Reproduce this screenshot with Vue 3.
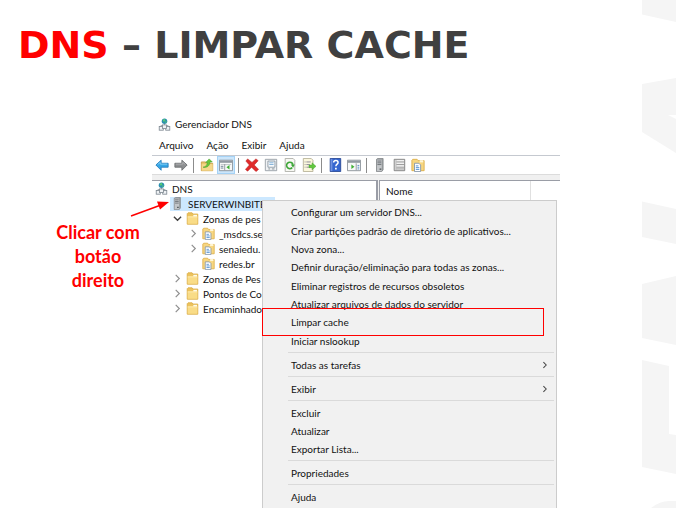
<script setup>
const menuBar = ['Arquivo', 'Ação', 'Exibir', 'Ajuda']

const toolGroups = [
  [{ id: 'back', label: 'Voltar' }, { id: 'forward', label: 'Avançar' }],
  [{ id: 'up', label: 'Subir um nível' }, { id: 'tree', label: 'Mostrar árvore', active: true }],
  [
    { id: 'delete', label: 'Excluir' },
    { id: 'props', label: 'Propriedades' },
    { id: 'refresh', label: 'Atualizar' },
    { id: 'export', label: 'Exportar lista' },
  ],
  [{ id: 'help', label: 'Ajuda' }, { id: 'pane', label: 'Painel de ações' }],
  [
    { id: 'server', label: 'Servidor' },
    { id: 'list', label: 'Lista' },
    { id: 'zone', label: 'Nova zona' },
  ],
]

const nodes = [
  { text: 'DNS', icon: 'dns', level: 0 },
  { text: 'SERVERWINBITBR', icon: 'server', level: 1, selected: true },
  { text: 'Zonas de pes', icon: 'folder', level: 2, chevron: 'open' },
  { text: '_msdcs.se', icon: 'zone', level: 3, chevron: 'closed' },
  { text: 'senaiedu.', icon: 'zone', level: 3, chevron: 'closed' },
  { text: 'redes.br', icon: 'zone', level: 3 },
  { text: 'Zonas de Pes', icon: 'folder', level: 2, chevron: 'closed' },
  { text: 'Pontos de Co', icon: 'folder', level: 2, chevron: 'closed' },
  { text: 'Encaminhado', icon: 'folder', level: 2, chevron: 'closed' },
]

const contextGroups = [
  [
    { text: 'Configurar um servidor DNS...' },
    { text: 'Criar partições padrão de diretório de aplicativos...' },
    { text: 'Nova zona...' },
    { text: 'Definir duração/eliminação para todas as zonas...' },
    { text: 'Eliminar registros de recursos obsoletos' },
    { text: 'Atualizar arquivos de dados do servidor' },
    { text: 'Limpar cache', marked: true },
    { text: 'Iniciar nslookup' },
  ],
  [{ text: 'Todas as tarefas', submenu: true }],
  [{ text: 'Exibir', submenu: true }],
  [{ text: 'Excluir' }, { text: 'Atualizar' }, { text: 'Exportar Lista...' }],
  [{ text: 'Propriedades' }],
  [{ text: 'Ajuda' }],
]
</script>

<template>
  <div class="slide">
    <svg class="sprite" aria-hidden="true">
      <symbol id="i-dns" viewBox="0 0 16 16">
        <circle cx="8" cy="4" r="3.4" fill="#2b8fb0" />
        <path d="M6 2.500 8 1l1 2-2 2zM9 4l2 .5L9.500 6.500z" fill="#5bd06a" />
        <path d="M8 7v3M3.500 11V9.500h9V11" fill="none" stroke="#7d8790" />
        <rect x="1.500" y="10.500" width="5" height="4.500" fill="#eef1f4" stroke="#7d8790" />
        <rect x="9.500" y="10.500" width="5" height="4.500" fill="#eef1f4" stroke="#7d8790" />
        <rect x="5.500" y="8.500" width="5" height="4.500" fill="#eef1f4" stroke="#7d8790" />
      </symbol>
      <symbol id="i-server" viewBox="0 0 16 16">
        <path d="M4 1.500 5.500.5h6v13l-1.500 2H4z" fill="#9a9ea1" stroke="#85898c" />
        <path d="M4.500 2h5.500v13H4.500z" fill="#c3c6c9" />
        <path d="M5 3.500h4.500M5 5.500h4.500M5 7.500h4.500" stroke="#686d71" />
        <path d="M7.500 12h2v1.500h-2z" fill="#4f5559" />
      </symbol>
      <symbol id="i-folder" viewBox="0 0 16 16">
        <path d="M1.500 15v-13l1-1h5l1 1.500h6V15z" fill="#edc35c" stroke="#d9ab45" />
        <path d="M9 3.500h4.500V6H9z" fill="#fffbe9" />
        <path d="M2 5.500h12v9H2z" fill="#f9dc87" />
        <path d="M2 6h12" stroke="#fff0bd" />
      </symbol>
      <symbol id="i-zone" viewBox="0 0 16 16">
        <path d="M1 14.500v-12l1-1h5l1 1.500h7v11.500z" fill="#f7d680" stroke="#dcae48" />
        <path d="M10 2.500h4V5h-4z" fill="#fff6d6" />
        <path d="M4 6h5l2 2v7.500H4z" fill="#fff" stroke="#8195aa" />
        <path d="M5.500 9h3M5.500 11h4M5.500 13h4" stroke="#4286ce" />
      </symbol>
      <symbol id="i-back" viewBox="0 0 16 16">
        <path d="M1 8l6-5.500V6h8v4.500H7V14z" fill="#35a6e6" stroke="#277dbb" stroke-linejoin="round" />
        <path d="M3 7.500 6 5v2h8" fill="none" stroke="#8ad4f7" />
      </symbol>
      <symbol id="i-forward" viewBox="0 0 16 16">
        <path d="M15 8 9 2.500V6H1v4.500h8V14z" fill="#8d8f91" stroke="#6c6e70" stroke-linejoin="round" />
        <path d="M2 7h8V5l3 2.500" fill="none" stroke="#b2b4b5" />
      </symbol>
      <symbol id="i-up" viewBox="0 0 16 16">
        <path d="M1.500 14.500V4.500h5L8 6h6.500v8.500z" fill="#e9c76d" stroke="#c99d43" />
        <path d="M2 14.500V7h12.500v7.500z" fill="#f5d88c" />
        <path d="M3.500 10.500C7 10 8 8 8.500 5H6.500L10.500 1 14 4.500h-2.500c-.5 4.500-3.500 7-8 6z" fill="#68c83a" stroke="#3e9b26" stroke-width=".6" />
      </symbol>
      <symbol id="i-tree" viewBox="0 0 16 16">
        <path d="M.5 2.500h15v12H.5z" fill="#f7f8f8" stroke="#858c93" />
        <path d="M1 3h14v2.500H1z" fill="#929aa2" />
        <path d="M2 7.500h12" stroke="#bcc1c5" />
        <path d="M6.500 7v7" stroke="#8b9298" />
        <path d="M2 9.500h3M2 11.500h3" stroke="#65798c" />
        <path d="M12 8v5L8.500 10.500z" fill="#3faf35" />
      </symbol>
      <symbol id="i-delete" viewBox="0 0 16 16">
        <path d="M3 1 8 5 12.500 1l2.500 2-4.500 5 5 5-3 2.500L7.500 10.500 3 15 .5 13l4.500-5-4-4.500z" fill="#e02a2a" stroke="#b41919" stroke-width=".6" />
      </symbol>
      <symbol id="i-props" viewBox="0 0 16 16">
        <path d="M1.500 1.500h13v13h-13z" fill="#f0f2f4" stroke="#959ca3" />
        <path d="M4.500 3.500h8v7h-8z" fill="#fff" stroke="#8593a0" />
        <path d="M6 5.500h5M6 7.500h5" stroke="#6fa5d2" />
        <path d="M5 12.500h2M9 12.500h3" stroke="#7c858c" />
      </symbol>
      <symbol id="i-refresh" viewBox="0 0 16 16">
        <path d="M2.500.5h9l2 2v13h-11z" fill="#f8f8f4" stroke="#a9aaa4" />
        <path d="M10.500 11a3.700 3.700 0 1 1 .9-3.300" fill="none" stroke="#3da638" stroke-width="1.800" />
        <path d="M9 7.500h4.500L11.500 11z" fill="#3da638" />
      </symbol>
      <symbol id="i-export" viewBox="0 0 16 16">
        <path d="M1.500.5h9l2 2v13h-11z" fill="#fbf7dc" stroke="#b3ae93" />
        <path d="M3 4.500h1M5 4.500h5M3 7.500h1M5 7.500h4M3 10.500h1M5 10.500h4" stroke="#817f91" />
        <path d="M8 8h3.500V5.500L16 9.500l-4.500 4V11H8z" fill="#62c83e" stroke="#409c2c" stroke-width=".5" />
      </symbol>
      <symbol id="i-help" viewBox="0 0 16 16">
        <path d="M2.500.5h12v15h-12z" fill="#3565cf" stroke="#274794" />
        <path d="M3 1h2v14H3z" fill="#6f91e2" />
        <path d="M6.500 5c0-3 5-3 5 0 0 2-2.500 2-2.500 4.500" fill="none" stroke="#fff" stroke-width="1.700" />
        <path d="M8 11h2v2H8z" fill="#fff" />
      </symbol>
      <symbol id="i-pane" viewBox="0 0 16 16">
        <path d="M.5 2.500h15v12H.5z" fill="#f7f8f8" stroke="#858c93" />
        <path d="M1 3h14v2.500H1z" fill="#929aa2" />
        <path d="M10.500 6v8" stroke="#8b9298" />
        <path d="M12 8.500h2M12 10.500h2M12 12.500h2" stroke="#4b86c0" />
        <path d="M5 7.500v5L8.500 10z" fill="#3faf35" />
      </symbol>
      <symbol id="i-list" viewBox="0 0 16 16">
        <path d="M2.500 1.500h12v13h-12z" fill="#f1f1f1" stroke="#777" />
        <path d="M4.500 2v12" stroke="#aaa" />
        <path d="M5 4.500h9M5 7.500h9M5 10.500h9M5 12.500h9" stroke="#8d8d8d" />
      </symbol>
      <symbol id="i-closed" viewBox="0 0 10 10">
        <path d="M3 1l4 4-4 4" fill="none" stroke="#8f8f8f" stroke-width="1.300" />
      </symbol>
      <symbol id="i-submenu" viewBox="0 0 10 10">
        <path d="M3 1.500 6.500 5 3 8.500" fill="none" stroke="#444" stroke-width="1.300" />
      </symbol>
      <symbol id="i-open" viewBox="0 0 10 10">
        <path d="M1 3l4 4 4-4" fill="none" stroke="#404040" stroke-width="1.500" />
      </symbol>
    </svg>

    <svg class="watermark" viewBox="0 0 34 508" aria-hidden="true">
      <g fill="#f5f5f5">
        <path d="M0 0h34v22L0 14.500z" />
        <path d="M0 84l34-6v37h-8l8 4v34L0 132z" />
        <path d="M0 201.500 34 209v35L0 237z" />
        <path d="M0 284l34-8v69L0 338z" />
        <path d="M0 360l27 6v68l7 1v39L0 467z" />
        <path d="M9 508q9-7 18-7h7v7z" />
      </g>
    </svg>

    <header class="heading">
      <h1><span class="accent">DNS</span> – LIMPAR CACHE</h1>
    </header>

    <main class="content">
      <p class="note">Clicar com botão direito</p>

      <section class="window">
        <div class="titlebar">
          <svg class="icon"><use href="#i-dns" /></svg>
          <span>Gerenciador DNS</span>
        </div>

        <nav class="menubar">
          <button v-for="entry in menuBar" :key="entry" type="button">{{ entry }}</button>
        </nav>

        <div class="toolbar">
          <template v-for="(group, g) in toolGroups" :key="g">
            <span v-if="g" class="divider"></span>
            <button
              v-for="tool in group"
              :key="tool.id"
              type="button"
              class="tool"
              :class="{ active: tool.active }"
              :aria-label="tool.label"
            >
              <svg><use :href="'#i-' + tool.id" /></svg>
            </button>
          </template>
        </div>

        <div class="panes">
          <ul class="tree">
            <li v-for="node in nodes" :key="node.text" :class="'level-' + node.level">
              <span v-if="node.level > 1" class="chevron">
                <svg v-if="node.chevron"><use :href="'#i-' + node.chevron" /></svg>
              </span>
              <button type="button" class="node" :class="{ selected: node.selected }">
                <svg class="icon"><use :href="'#i-' + node.icon" /></svg>
                <span>{{ node.text }}</span>
              </button>
            </li>
          </ul>
          <div class="details">
            <div class="column-head">Nome</div>
          </div>
        </div>

        <div class="context" role="menu">
          <div v-for="(group, g) in contextGroups" :key="g" class="group" :class="'rows-' + group.length">
            <button
              v-for="item in group"
              :key="item.text"
              type="button"
              role="menuitem"
              :class="{ marked: item.marked }"
            >
              <span>{{ item.text }}</span>
              <svg v-if="item.submenu"><use href="#i-submenu" /></svg>
            </button>
          </div>
        </div>

        <svg class="pointer" viewBox="0 0 40 18" aria-hidden="true">
          <path d="M1 16 31 5" stroke="#f00" stroke-width="1.500" />
          <path d="M39 2 30 9.500 27 1.500z" fill="#f00" />
        </svg>
      </section>
    </main>
  </div>
</template>

<style>
body {
  margin: 0;
  background: #fff;
}
</style>

<style scoped>
.slide {
  position: relative;
  box-sizing: border-box;
  height: 100vh;
  overflow: hidden;
  font-family: Lato, 'Open Sans', sans-serif;
  font-size: 10px;
  color: #111;
}
.sprite {
  position: absolute;
  width: 0;
  height: 0;
}
.watermark {
  position: absolute;
  top: 0;
  right: 0;
  width: 34px;
  height: 508px;
}
button {
  margin: 0;
  padding: 0;
  border: 0;
  background: none;
  font: inherit;
  color: inherit;
  white-space: nowrap;
}
.heading {
  padding: 21px 18px 45px;
}
h1 {
  margin: 0;
  font: 700 38px/48px 'DejaVu Sans', sans-serif;
  color: #404040;
}
.accent {
  color: #f00;
}
.content {
  display: grid;
  grid-template-columns: 152px minmax(0, 1fr);
  padding-right: 116px;
}
.note {
  margin: 106px 8px 0 52px;
  font: 700 18px/24px Lato, sans-serif;
  color: #f00;
  text-align: center;
}
.window {
  position: relative;
}
.icon {
  flex: none;
  width: 13px;
  height: 13px;
}
.titlebar {
  display: flex;
  align-items: center;
  gap: 4px;
  height: 20px;
  padding-left: 6px;
}
.menubar {
  display: flex;
  align-items: center;
  gap: 13px;
  height: 21px;
  padding-left: 7px;
  border-bottom: 1px solid #c5c9d0;
}
.toolbar {
  display: flex;
  align-items: center;
  gap: 1px;
  height: 18px;
  padding-left: 1px;
  border-bottom: 1px solid #dcdcdc;
}
.tool {
  display: grid;
  place-items: center;
  width: 18px;
  height: 18px;
}
.tool svg {
  width: 14px;
  height: 14px;
}
.tool.active {
  background: #cce6fb;
  box-shadow: inset 0 0 0 1px #a5d2f5;
}
.divider {
  width: 1px;
  height: 15px;
  margin: 0 3px 0 2px;
  background: #8c8c8c;
}
.panes {
  display: grid;
  grid-template-columns: 226px minmax(0, 1fr);
  gap: 1px;
  padding-top: 5px;
  background: #f0f0f0;
}
.tree {
  margin: 0;
  padding: 0;
  border-top: 1px solid #9a9da6;
  border-right: 2px solid #9a9da6;
  background: #fff;
  list-style: none;
  overflow: hidden;
}
.tree li {
  display: flex;
  align-items: center;
  height: 15px;
}
.level-0 {
  padding-left: 2px;
}
.level-1 {
  padding-left: 18px;
}
.level-2 {
  padding-left: 19px;
}
.level-3 {
  padding-left: 35px;
}
.chevron {
  display: grid;
  flex: none;
  place-items: center;
  width: 12px;
  height: 12px;
  margin-right: 2px;
}
.chevron svg {
  width: 9px;
  height: 9px;
}
.node {
  display: flex;
  align-items: center;
  gap: 4px;
  height: 14px;
  padding: 0 2px 0 1px;
}
.node.selected {
  background: #cce8ff;
}
.details {
  border-top: 1px solid #9a9da6;
  border-left: 1px solid #9a9da6;
  background: #fff;
}
.column-head {
  height: 19px;
  margin-right: 29px;
  padding-left: 6px;
  border-right: 1px solid #e0e0e0;
  line-height: 20px;
}
.context {
  position: absolute;
  top: 86px;
  left: 110px;
  box-sizing: border-box;
  width: 295px;
  padding: 2px;
  border: 1px solid #ccc;
  background: #f1f1f1;
}
.group {
  display: grid;
  grid-auto-rows: 1fr;
  min-height: 18px;
}
.group.rows-3 {
  min-height: 55px;
}
.group.rows-8 {
  min-height: 147px;
}
.group + .group::before {
  content: '';
  height: 1px;
  margin: 2px 0 3px 23px;
  background: #dadada;
}
.group + .group {
  grid-template-rows: 6px;
}
.context button {
  position: relative;
  display: flex;
  align-items: center;
  justify-content: space-between;
  min-height: 18px;
  padding: 0 5px 0 26px;
}
.context button svg {
  width: 8px;
  height: 8px;
}
.marked::after {
  content: '';
  position: absolute;
  top: -5px;
  right: 10px;
  bottom: -4px;
  left: -3px;
  z-index: 1;
  border: 1px solid #f00;
}
.pointer {
  position: absolute;
  top: 86px;
  left: -22px;
  width: 40px;
  height: 18px;
}
</style>
